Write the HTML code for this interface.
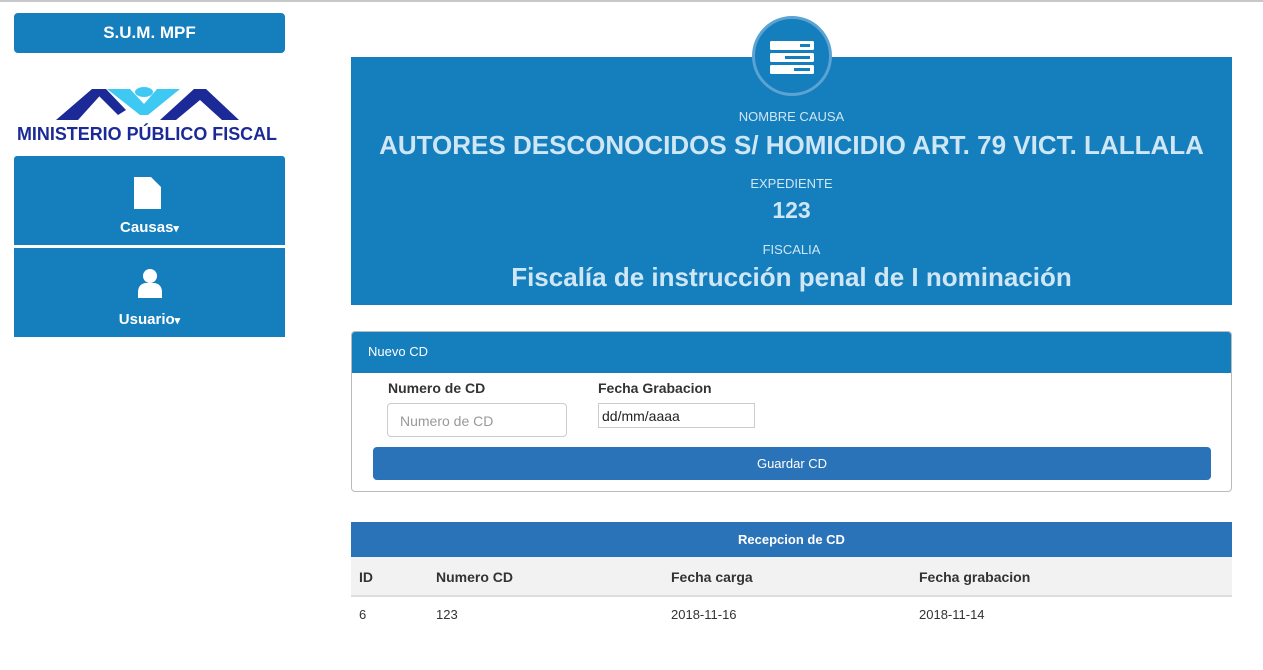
<!DOCTYPE html>
<html><head><meta charset="utf-8"><style>
*{box-sizing:border-box;margin:0;padding:0}
body{width:1263px;height:670px;background:#fff;font-family:"Liberation Sans",Arial,sans-serif;position:relative;overflow:hidden}
.abs{position:absolute}
.blue{background:#157ebd}
.side{left:14px;width:271px;color:#fff;text-align:center;font-weight:bold}
.hd{color:#cfe6f5;text-align:center;left:351px;width:881px}
</style></head><body>
<div class="abs" style="left:0;top:0;width:1263px;height:2px;background:#c8c8c8"></div>
<div class="abs side blue" style="top:13px;height:40px;border-radius:4px;font-size:17px;line-height:40px">S.U.M. MPF</div>
<svg class="abs" style="left:14px;top:84px" width="271" height="60" viewBox="0 0 271 60">
<polygon points="42,36 78,5 92,5 64,36" fill="#1c2a98"/>
<polygon points="78,5 92,5 112,26 104,31" fill="#1c2a98"/>
<polygon points="93,5 116,5 130,20 143,5 166,5 134,31 126,31" fill="#3ec9f3"/>
<ellipse cx="130" cy="8" rx="9" ry="5" fill="#3ec9f3"/>
<polygon points="146,36 180,5 192,5 225,36 208,36 186,16 162,36" fill="#1c2a98"/>
<text x="133" y="56" text-anchor="middle" font-family="Liberation Sans" font-weight="bold" font-size="18" fill="#1c2a98" textLength="260" lengthAdjust="spacingAndGlyphs">MINISTERIO PÚBLICO FISCAL</text>
</svg>
<div class="abs side blue" style="top:156px;height:89px;border-radius:3px 3px 0 0">
<svg class="abs" style="left:120px;top:21px" width="28" height="32" viewBox="0 0 28 32"><path d="M0 0h17l10 10v22H0z" fill="#fff"/></svg>
<div class="abs" style="top:63px;width:100%;font-size:15px">Causas<span style="font-size:11px">▾</span></div></div>
<div class="abs side blue" style="top:248px;height:89px">
<svg class="abs" style="left:124px;top:20px" width="24" height="30" viewBox="0 0 24 30"><circle cx="12" cy="8" r="7" fill="#fff"/><path d="M0 30v-6c0-6 4-9 8-9h8c4 0 8 3 8 9v6z" fill="#fff"/></svg>
<div class="abs" style="top:63px;width:100%;font-size:15px">Usuario<span style="font-size:11px">▾</span></div></div>

<div class="abs blue" style="left:351px;top:57px;width:881px;height:248px"></div>
<div class="abs blue" style="left:752px;top:16px;width:80px;height:80px;border-radius:50%;border:3px solid #5aa3d3"></div>
<svg class="abs" style="left:770px;top:41px" width="44" height="36" viewBox="0 0 44 36">
<rect x="0" y="0" width="44" height="9" rx="1.5" fill="#fff"/><rect x="30" y="3" width="10" height="3" fill="#157ebd"/>
<rect x="0" y="12" width="44" height="9" rx="1.5" fill="#fff"/><rect x="15" y="15" width="25" height="3" fill="#157ebd"/>
<rect x="0" y="24" width="44" height="9" rx="1.5" fill="#fff"/><rect x="24" y="27" width="16" height="3" fill="#157ebd"/></svg>
<div class="abs hd" style="top:109px;font-size:13px">NOMBRE CAUSA</div>
<div class="abs hd" style="top:130px;font-size:26px;font-weight:bold">AUTORES DESCONOCIDOS S/ HOMICIDIO ART. 79 VICT. LALLALA</div>
<div class="abs hd" style="top:176px;font-size:13px">EXPEDIENTE</div>
<div class="abs hd" style="top:197px;font-size:23px;font-weight:bold">123</div>
<div class="abs hd" style="top:242px;font-size:13px">FISCALIA</div>
<div class="abs hd" style="top:262px;font-size:26px;font-weight:bold">Fiscalía de instrucción penal de I nominación</div>

<div class="abs" style="left:351px;top:331px;width:881px;height:161px;border:1px solid #bbb;border-radius:4px;overflow:hidden">
<div class="blue" style="height:41px;color:#fff;font-size:13px;line-height:40px;padding-left:16px">Nuevo CD</div>
<div class="abs" style="left:36px;top:48px;font-size:14px;font-weight:bold;color:#333">Numero de CD</div>
<div class="abs" style="left:246px;top:48px;font-size:14px;font-weight:bold;color:#333">Fecha Grabacion</div>
<div class="abs" style="left:35px;top:71px;width:180px;height:34px;border:1px solid #ccc;border-radius:4px;font-size:14px;color:#999;padding:9px 12px">Numero de CD</div>
<div class="abs" style="left:246px;top:71px;width:157px;height:25px;border:1px solid #ccc;font-size:14px;color:#222;padding:4px 3px">dd/mm/aaaa</div>
<div class="abs" style="left:21px;top:115px;width:838px;height:33px;background:#2b73b8;border-radius:4px;color:#fff;font-size:13px;text-align:center;line-height:33px">Guardar CD</div>
</div>

<div class="abs" style="left:351px;top:522px;width:881px;height:35px;background:#2b73b8;color:#fff;font-weight:bold;font-size:13px;text-align:center;line-height:35px">Recepcion de CD</div>
<div class="abs" style="left:351px;top:557px;width:881px;height:40px;background:#f2f2f2;border-bottom:2px solid #ddd;font-size:14px;font-weight:bold;color:#333">
<span class="abs" style="left:8px;top:12px">ID</span><span class="abs" style="left:85px;top:12px">Numero CD</span><span class="abs" style="left:320px;top:12px">Fecha carga</span><span class="abs" style="left:568px;top:12px">Fecha grabacion</span></div>
<div class="abs" style="left:351px;top:607px;width:881px;font-size:13px;color:#333">
<span class="abs" style="left:8px">6</span><span class="abs" style="left:85px">123</span><span class="abs" style="left:320px">2018-11-16</span><span class="abs" style="left:568px">2018-11-14</span></div>
</body></html>
